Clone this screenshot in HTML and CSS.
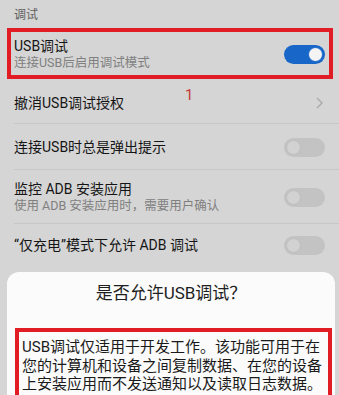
FILE: index.html
```html
<!DOCTYPE html>
<html lang="zh-CN">
<head>
    <meta charset="UTF-8">
    <meta name="viewport" content="width=device-width, initial-scale=1.0">
    <title>开发人员选项</title>
    <link rel="stylesheet" href="styles.css">
</head>
<body>
    <div class="pantalla">
        <div class="grupo">调试</div>

        <!-- fila marcada en rojo -->
        <div class="fila doble marcada">
            <div class="textos">
                <div class="titulo">USB调试</div>
                <div class="sub">连接USB后启用调试模式</div>
            </div>
            <span class="interruptor encendido"></span>
        </div>

        <div class="fila simple primera">
            <div class="titulo">撤消USB调试授权</div>
            <svg class="flecha" width="7" height="12" viewBox="0 0 7 12">
                <path d="M1 1 L6 6 L1 11" fill="none" stroke="#a9a9a9" stroke-width="1.4"/>
            </svg>
        </div>

        <div class="fila simple">
            <div class="titulo">连接USB时总是弹出提示</div>
            <span class="interruptor"></span>
        </div>

        <div class="fila doble">
            <div class="textos">
                <div class="titulo">监控 ADB 安装应用</div>
                <div class="sub">使用 ADB 安装应用时，需要用户确认</div>
            </div>
            <span class="interruptor"></span>
        </div>

        <div class="fila simple ultima">
            <div class="titulo">“仅充电”模式下允许 ADB 调试</div>
            <span class="interruptor"></span>
        </div>

        <span class="numero">1</span>

        <div class="dialogo">
            <div class="dialogo-titulo">是否允许USB调试？</div>
            <div class="dialogo-texto">USB调试仅适用于开发工作。该功能可用于在您的计算机和设备之间复制数据、在您的设备上安装应用而不发送通知以及读取日志数据。</div>
        </div>
    </div>
</body>
</html>
```

FILE: styles.css
```css
html, body {
    margin: 0;
    padding: 0;
}
body {
    font-family: Roboto, "Noto Sans CJK SC", sans-serif;
    background-color: #d5d5d5;
    color: #151515;
}
.pantalla {
    position: relative;
    width: 339px;
    height: 395px;
    overflow: hidden;
}
.grupo {
    padding: 7px 14px 0;
    font-size: 12px;
    line-height: 16px;
    color: #606060;
}
.fila {
    display: flex;
    align-items: center;
    justify-content: space-between;
    margin-left: 14px;
    padding-right: 14px;
    border-bottom: 1px solid #c7c7c7;
}
.titulo {
    font-size: 14px;
    line-height: 20px;
}
.sub {
    font-size: 12.5px;
    line-height: 16px;
    color: #808080;
}
.doble .titulo {
    line-height: 18px;
}
.doble {
    padding-top: 10px;
    padding-bottom: 9px;
}
.simple {
    padding-top: 13px;
    padding-bottom: 12px;
}
.primera {
    padding-top: 14px;
    padding-bottom: 10px;
}
.ultima {
    padding-top: 11px;
    padding-bottom: 11px;
    border-bottom: none;
}
/* recuadro rojo de la primera fila */
.marcada {
    margin: 5px 6px 0 7px;
    padding: 5px 4px 4px 3px;
    border: 4px solid #e11c24;
}
.flecha {
    margin-right: 2px;
}
.interruptor {
    position: relative;
    width: 41px;
    height: 19px;
    border-radius: 10px;
    background-color: #c3c3c3;
    flex-shrink: 0;
}
.interruptor::after {
    content: "";
    position: absolute;
    left: 2px;
    top: 2px;
    width: 13px;
    height: 13px;
    border-radius: 50%;
    background-color: #d2d2d2;
    border: 1px solid #bdbdbd;
}
.interruptor.encendido {
    background-color: #1766c8;
}
.interruptor.encendido::after {
    left: auto;
    right: 2px;
    background-color: #f4f4f4;
    border: 1px solid #1766c8;
}
.numero {
    position: absolute;
    left: 185px;
    top: 86px;
    font-size: 15px;
    color: #c63a3a;
}
.dialogo {
    margin: 6px 4px 0 7px;
    background-color: #fbfbfb;
    border-radius: 12px 12px 0 0;
    padding-bottom: 20px;
}
.dialogo-titulo {
    text-align: center;
    font-size: 17px;
    line-height: 22px;
    padding: 10px 0 22px;
    color: #1e1e1e;
}
.dialogo-texto {
    margin: 2px 3px 0 8px;
    border: 4px solid #e11c24;
    padding: 6px 2px 4px 3px;
    font-size: 15px;
    line-height: 18.5px;
    color: #1a1a1a;
}
```
